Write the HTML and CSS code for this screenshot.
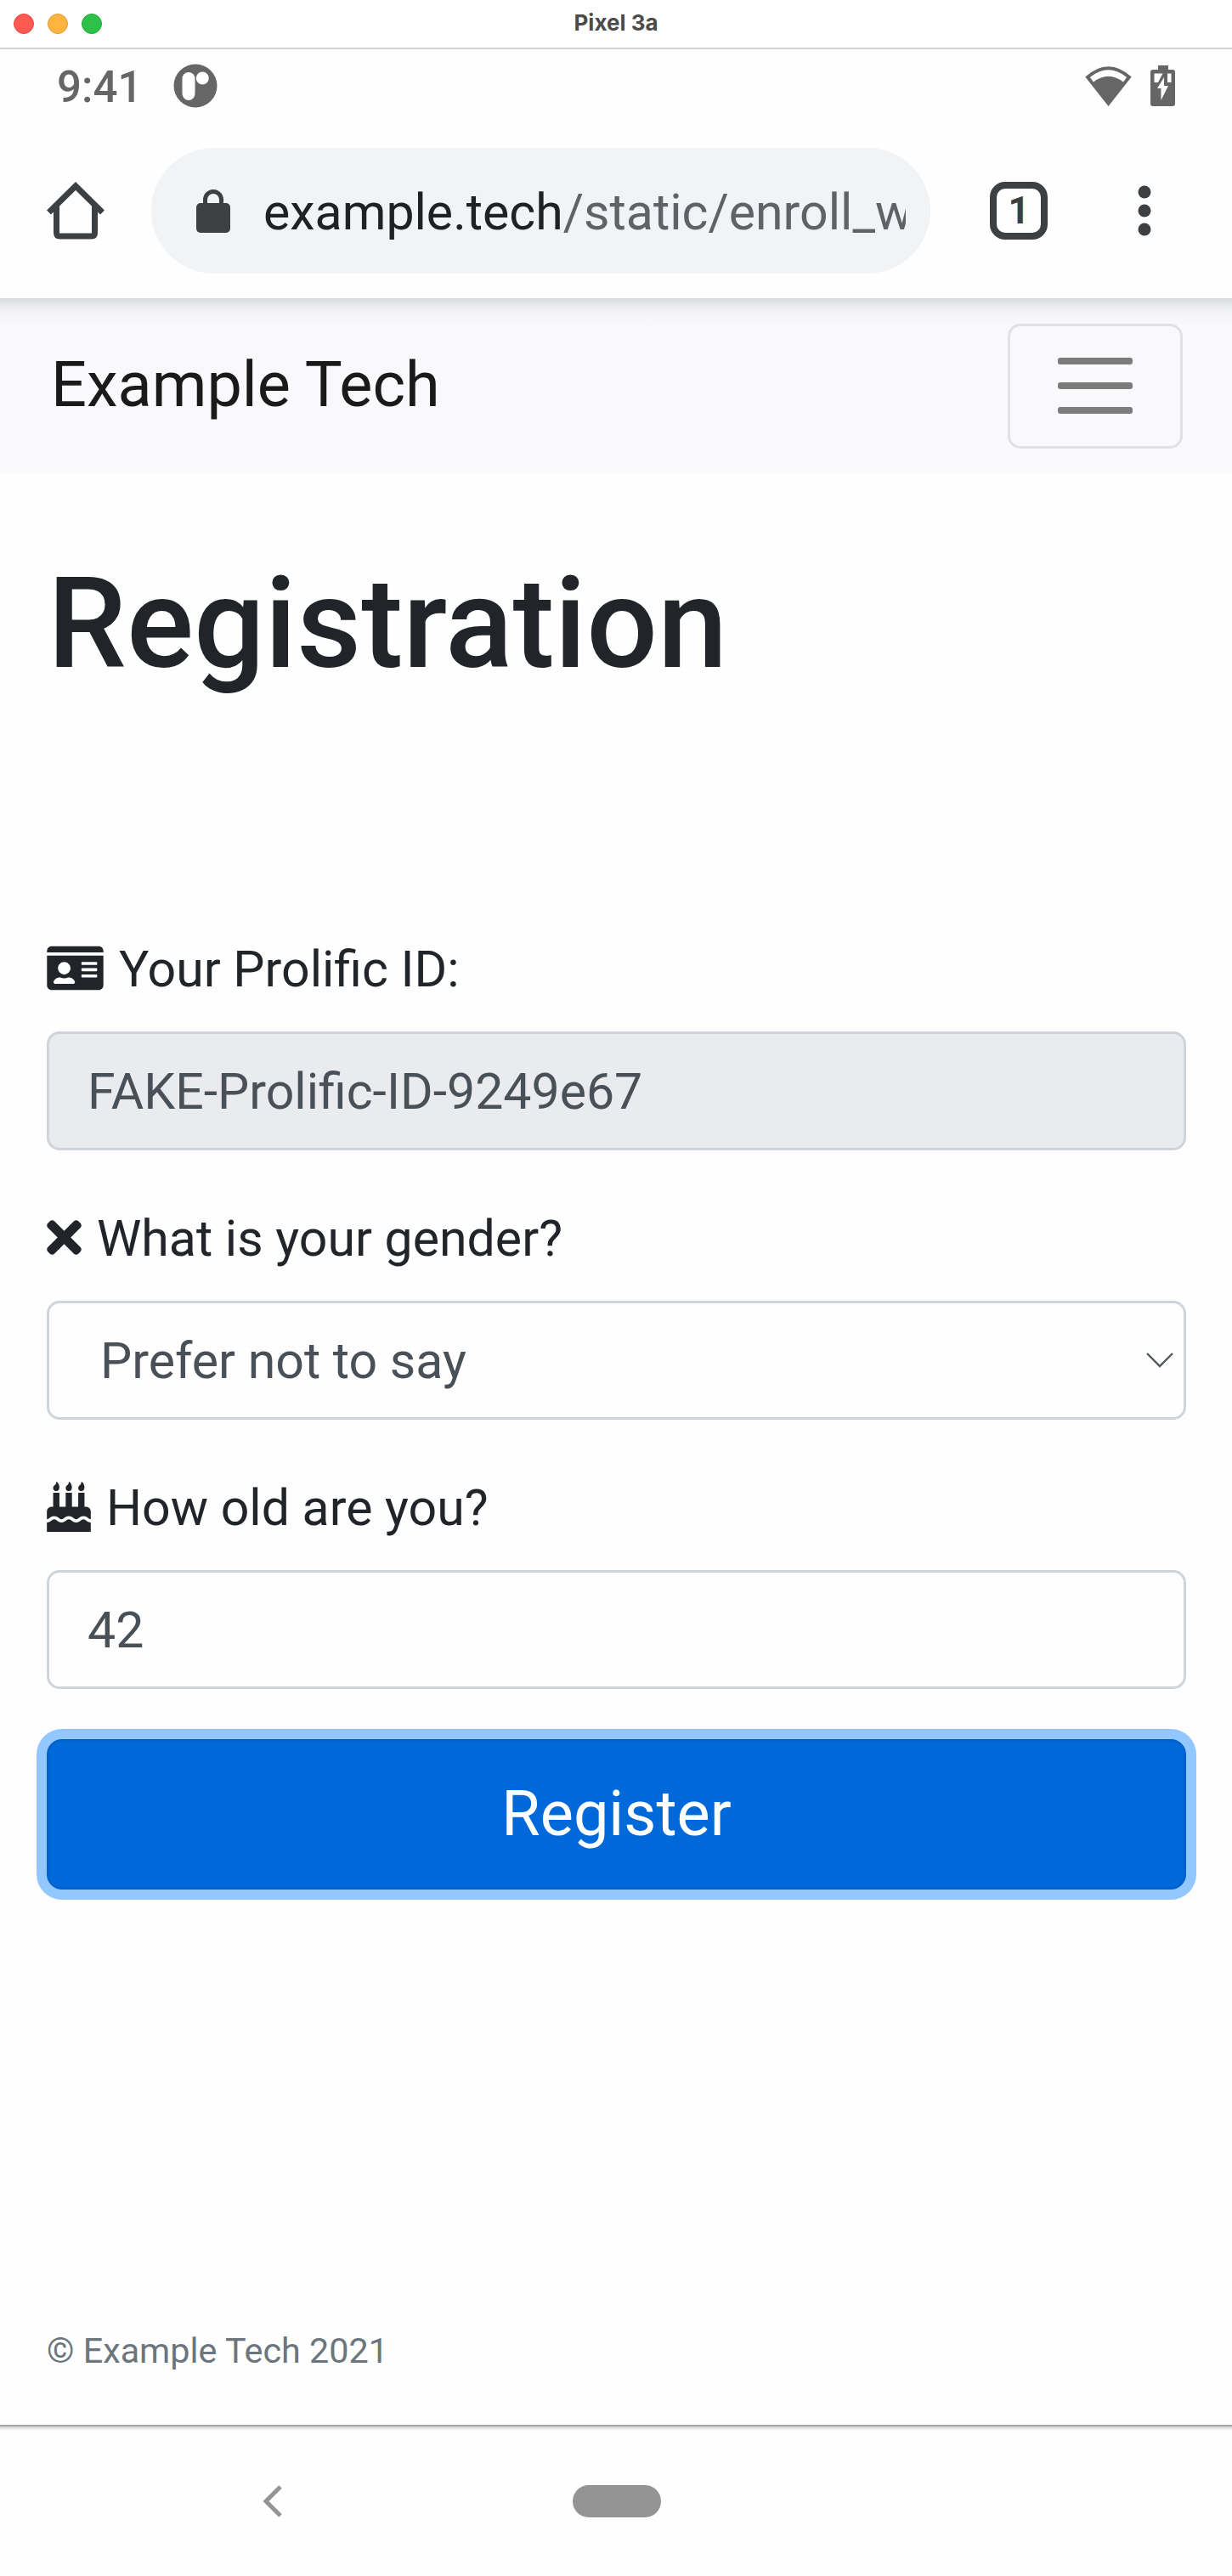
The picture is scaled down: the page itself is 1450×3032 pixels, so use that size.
FILE: index.html
```html
<!DOCTYPE html>
<html lang="en">
<head>
<meta charset="utf-8">
<title>Pixel 3a</title>
<link rel="stylesheet" href="styles.css">
</head>
<body>
<header class="titlebar">
  <div class="lights"><i class="light red"></i><i class="light amber"></i><i class="light green"></i></div>
  <span class="title">Pixel 3a</span>
</header>
<div class="status">
  <span class="time">9:41</span>
  <svg class="app" viewBox="0 0 52 52" width="52" height="52"><circle cx="26" cy="26" r="25.5" fill="#666"/><rect x="10.5" y="10" width="15" height="33" rx="7.5" fill="#fff"/><circle cx="34.3" cy="17" r="7.5" fill="#fff"/></svg>
  <svg class="wifi" viewBox="0 0 55 47" width="55" height="47"><path d="M27.500 47 0.300 12.500Q27.500-12 54.700 12.500Z" fill="#666"/><path d="M5.800 13Q27.500-4.500 49.200 13L45 18.500Q27.500 5 10 18.500Z" fill="#fff"/></svg>
  <svg viewBox="0 0 29 48" width="29" height="48"><path d="M9 0h12v5h5q3 0 3 3v37q0 3-3 3H3q-3 0-3-3V8q0-3 3-3h6z" fill="#666"/><path d="M4.500 9.500H14.500L9 20H4.500zM20 9.500h4.500V20H20z" fill="#fff"/><path d="M16 14v10h5L12.500 41V27H8z" fill="#fff"/></svg>
</div>
<div class="toolbar">
  <svg class="home" viewBox="0 0 68 68" width="68" height="68" fill="none" stroke="#3c4043" stroke-width="7"><path d="M2.500 36 34 5 65.500 36"/><path d="M11.500 28v32q0 4 4 4h37q4 0 4-4V28"/></svg>
  <div class="omnibox">
    <svg viewBox="0 0 40 52" width="40" height="52"><path d="M10.500 20v-7a9.500 9.500 0 0 1 19 0v7" fill="none" stroke="#3c4043" stroke-width="5"/><rect y="17" width="40" height="35" rx="5" fill="#3c4043"/></svg>
    <div class="url">example.tech<span>/static/enroll_w</span></div>
  </div>
  <div class="tabs">1</div>
  <svg class="dots" viewBox="0 0 16 60" width="16" height="60" fill="#3c4043"><circle cx="8" cy="8" r="7.500"/><circle cx="8" cy="30" r="7.500"/><circle cx="8" cy="52" r="7.500"/></svg>
</div>
<nav class="navbar">
  <span class="brand">Example Tech</span>
  <button class="toggler" aria-label="Menu"><i></i><i></i><i></i></button>
</nav>
<main class="page">
  <h1>Registration</h1>
  <div class="field">
    <div class="label"><svg viewBox="0 0 576 512" width="67" height="59"><path fill="#212529" d="M528 32H48C21.500 32 0 53.500 0 80v16h576V80c0-26.500-21.500-48-48-48zM0 432c0 26.500 21.500 48 48 48h480c26.500 0 48-21.500 48-48V128H0v304zm352-232c0-4.400 3.600-8 8-8h144c4.400 0 8 3.600 8 8v16c0 4.400-3.600 8-8 8H360c-4.400 0-8-3.600-8-8v-16zm0 64c0-4.400 3.600-8 8-8h144c4.400 0 8 3.600 8 8v16c0 4.400-3.600 8-8 8H360c-4.400 0-8-3.600-8-8v-16zm0 64c0-4.400 3.600-8 8-8h144c4.400 0 8 3.600 8 8v16c0 4.400-3.600 8-8 8H360c-4.400 0-8-3.600-8-8v-16zM176 192c35.300 0 64 28.700 64 64s-28.700 64-64 64-64-28.700-64-64 28.700-64 64-64zM67.100 396.200C75.500 370.500 99.600 352 128 352h8.200c12.300 5.100 25.700 8 39.800 8s27.600-2.900 39.800-8h8.200c28.400 0 52.500 18.500 60.900 44.200 3.200 9.900-5.200 19.800-15.600 19.800H82.700c-10.400 0-18.800-10-15.600-19.800z"/></svg><span>Your Prolific ID:</span></div>
    <div class="control disabled">FAKE-Prolific-ID-9249e67</div>
  </div>
  <div class="field">
    <div class="label"><svg viewBox="0 0 352 512" width="41" height="59"><path fill="#212529" d="M242.720 256l100.070-100.070c12.280-12.280 12.280-32.190 0-44.480l-22.240-22.240c-12.280-12.280-32.190-12.280-44.480 0L176 189.280 75.930 89.210c-12.280-12.280-32.190-12.280-44.480 0L9.210 111.450c-12.280 12.280-12.280 32.190 0 44.480L109.280 256 9.210 356.070c-12.280 12.280-12.280 32.190 0 44.480l22.240 22.240c12.280 12.280 32.200 12.280 44.480 0L176 322.720l100.070 100.070c12.280 12.280 32.200 12.280 44.480 0l22.240-22.240c12.280-12.280 12.280-32.190 0-44.480L242.720 256z"/></svg><span>What is your gender?</span></div>
    <div class="control select"><span>Prefer not to say</span><svg viewBox="0 0 34 20" width="34" height="20"><path d="M2 2 17 17 32 2" fill="none" stroke="#50565d" stroke-width="2.400"/></svg></div>
  </div>
  <div class="field">
    <div class="label"><svg viewBox="0 0 448 512" width="52" height="59"><path fill="#212529" d="M448 384c-28.020 0-31.260-32-74.500-32-43.430 0-46.825 32-74.750 32-27.695 0-31.454-32-74.750-32-42.842 0-47.218 32-74.500 32-28.148 0-31.202-32-74.750-32-43.547 0-46.653 32-74.750 32v-80c0-26.500 21.500-48 48-48h16V112h64v144h64V112h64v144h64V112h64v144h16c26.500 0 48 21.500 48 48v80zm0 128H0v-96c43.356 0 46.767-32 74.750-32 27.951 0 31.253 32 74.750 32 42.843 0 47.217-32 74.500-32 28.148 0 31.201 32 74.750 32 43.357 0 46.767-32 74.750-32 27.488 0 31.252 32 74.500 32v96zM96 96c-17.750 0-32-14.250-32-32 0-31 32-23 32-64 12 0 32 29.500 32 56s-14.250 40-32 40zm128 0c-17.750 0-32-14.250-32-32 0-31 32-23 32-64 12 0 32 29.500 32 56s-14.250 40-32 40zm128 0c-17.750 0-32-14.250-32-32 0-31 32-23 32-64 12 0 32 29.500 32 56s-14.250 40-32 40z"/></svg><span>How old are you?</span></div>
    <div class="control">42</div>
  </div>
  <button class="register">Register</button>
  <footer>© Example Tech 2021</footer>
</main>
<div class="navigation">
  <svg viewBox="0 0 24 38" width="24" height="38"><path d="M21 2 4 19 21 36" fill="none" stroke="#949494" stroke-width="5"/></svg>
  <i class="pill"></i>
</div>
</body>
</html>
```
FILE: styles.css
```css
* { box-sizing: border-box; }
body { margin: 0; width: 1450px; height: 3032px; overflow: hidden; display: flex; flex-direction: column; background: #fefefe; color: #212529; font-family: Roboto, "Liberation Sans", sans-serif; font-size: 59px; }
svg { display: block; flex: none; }
button { font-family: inherit; margin: 0; }
.titlebar { height: 58px; flex: none; display: grid; grid-template-columns: 1fr auto 1fr; align-items: center; border-bottom: 2px solid #d2d2d2; padding: 0 16px; background: #fff; }
.lights { display: flex; gap: 16px; }
.light { width: 24px; height: 24px; border-radius: 50%; border: 1px solid #e2463f; background: #ff5a52; }
.light.amber { background: #ffb43f; border-color: #e09b32; }
.light.green { background: #2dc14a; border-color: #23a53a; }
.title { font-family: Inter, Roboto, sans-serif; font-weight: 700; font-size: 26px; line-height: 30px; padding-bottom: 2px; color: #4b4b4b; }
.status { height: 86px; flex: none; display: flex; align-items: center; padding: 0 67px; color: #666; }
.time { font-size: 51px; font-weight: 500; width: 137px; padding-top: 2px; }
.wifi { margin-left: auto; margin-right: 22px; }
.toolbar { height: 207px; flex: none; display: flex; align-items: center; padding: 0 95px 0 55px; }
.omnibox { margin-left: 55px; width: 917px; height: 148px; border-radius: 74px; background: #f2f3f5; display: flex; align-items: center; padding: 0 29px 0 53px; gap: 39px; }
.url { flex: 1; min-width: 0; overflow: hidden; white-space: nowrap; font-size: 59px; padding-top: 4px; color: #202124; }
.url span { color: #5f6368; }
.tabs { margin-left: 70px; width: 68px; height: 68px; border: 8px solid #3c4043; border-radius: 18px; display: flex; align-items: center; justify-content: center; font-size: 44px; font-weight: 700; color: #3c4043; }
.dots { margin-left: 106px; }
.navbar { height: 206px; flex: none; display: flex; align-items: center; justify-content: space-between; padding: 0 58px 0 60px; background: linear-gradient(#d8dadc, #ebecee 10px, #f5f5f7 20px, #f9f9fb 30px); }
.brand { font-size: 73.800px; padding-bottom: 2px; color: #1a1a1b; }
.toggler { width: 206px; height: 147px; border: 3px solid #e1e1e3; border-radius: 15px; background: #f9f9fb; display: flex; flex-direction: column; align-items: center; justify-content: center; gap: 21px; padding: 0; }
.toggler i { width: 88px; height: 8px; border-radius: 3px; background: #7c7c7d; }
.page { height: 2297px; flex: none; padding: 89px 54px 0 55px; display: flex; flex-direction: column; }
h1 { margin: 0 0 274px 1px; font-size: 147.600px; font-weight: 500; line-height: 177px; }
.field { margin-bottom: 60px; }
.label { height: 86px; display: flex; align-items: center; gap: 18px; margin-bottom: 31px; }
.label svg { margin-bottom: 2px; }
.control { height: 140px; border: 3px solid #ced4da; border-radius: 15px; padding: 0 45px; display: flex; align-items: center; color: #495057; }
.disabled { background: #e9ebef; }
.select { padding: 0 11px 0 60px; justify-content: space-between; }
.register { margin-top: -1px; height: 177px; flex: none; border: 3px solid #0062cc; border-radius: 18px; background: #0069d9; box-shadow: 0 0 0 12px #93c7ff; color: #fff; font-size: 73.800px; padding: 0 0 2px; }
footer { margin-top: 512px; font-size: 41.300px; line-height: 62px; color: #6c757d; }
.navigation { flex: 1; display: flex; align-items: center; padding: 0 0 0 309px; border-top: 2px solid #a5a8ab; background: linear-gradient(#d0d3d6, #fefefe 5px); }
.pill { width: 104px; height: 38px; border-radius: 19px; background: #949494; margin-left: 341px; }
```
